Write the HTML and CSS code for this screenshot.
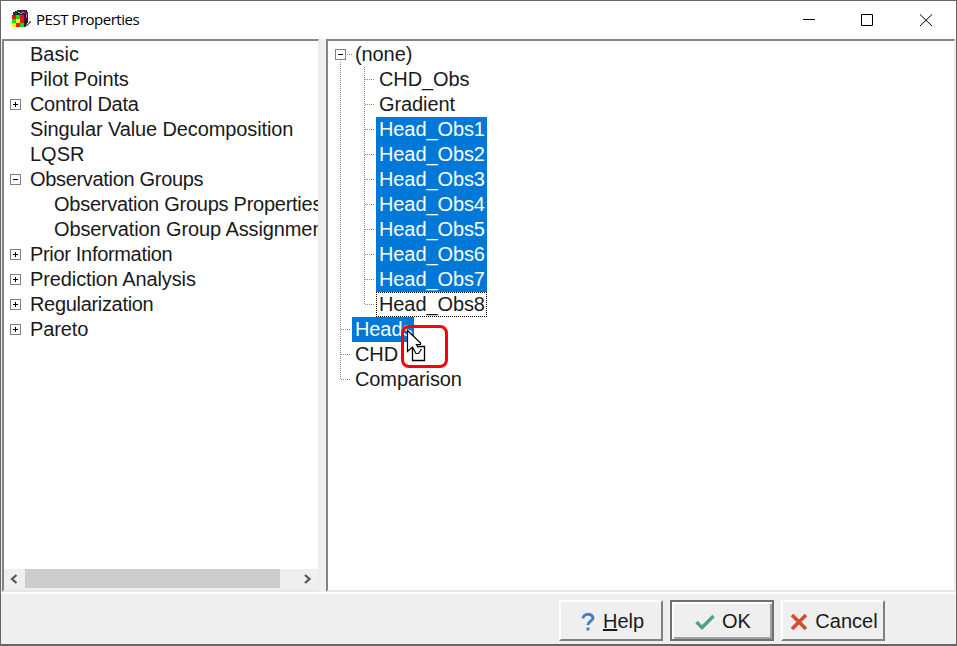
FILE: index.html
```html
<!DOCTYPE html>
<html lang="en">
<head>
<meta charset="utf-8">
<title>PEST Properties</title>
<link rel="stylesheet" href="styles.css">
</head>
<body>
<div class="window">
  <header class="titlebar">
    <svg class="app-icon" width="20" height="18" viewBox="0 0 20 18" shape-rendering="crispEdges">
      <path fill="#222" d="M2 2h2V1h2V0h10v2h1v11h-1v1h-1v3h-2V5H2z"/>
      <path fill="#3434e8" d="M5 1h3v1H5zM10 1h3v1h-3zM3 3h3v1H3z"/>
      <path fill="#40d8e8" d="M7 2h2v1H7zM9 3h2v1H9z"/>
      <path fill="#e040c0" d="M11 2h3v1h-3zM15 3h1v5h-1z"/>
      <path fill="#f01010" d="M1 5h4v4H1zM9 5h4v4H9zM5 13h4v4H5z"/>
      <path fill="#10e020" d="M5 5h4v4H5zM1 9h4v4H1zM9 13h4v4H9z"/>
      <path fill="#fff010" d="M5 9h4v4H5zM1 13h4v4H1z"/>
      <path fill="#f01010" d="M9 9h4v4H9z"/>
      <path fill="#777" d="M18 11h2v2h-1v1h-1v1h-1v1h-2v-2h2v-1h1z"/>
    </svg>
    <h1>PEST Properties</h1>
    <svg class="controls" width="130" height="13" viewBox="0 0 130 13" fill="none" stroke="#000">
      <path d="M0 5.500h12M58.500.5h11v11h-11zM117 .5l12 11.500M129 .5l-12 11.500"/>
    </svg>
  </header>
  <main class="panes">
    <nav class="pane sections">
      <ul class="list">
        <li>Basic</li>
        <li class="snug">Pilot Points</li>
        <li class="tight"><i class="box plus"></i>Control Data</li>
        <li class="snug">Singular Value Decomposition</li>
        <li>LQSR</li>
        <li class="tight"><i class="box"></i>Observation Groups</li>
        <li class="sub tight">Observation Groups Properties</li>
        <li class="sub snug">Observation Group Assignments</li>
        <li class="tight"><i class="box plus"></i>Prior Information</li>
        <li class="snug"><i class="box plus"></i>Prediction Analysis</li>
        <li class="tight"><i class="box plus"></i>Regularization</li>
        <li class="snug"><i class="box plus"></i>Pareto</li>
      </ul>
      <div class="scrollbar">
        <svg width="21" height="19" viewBox="0 0 21 19"><path d="M12.500 6L8 10l4.500 4" fill="none" stroke="#555" stroke-width="2.200"/></svg>
        <div class="thumb"></div>
        <svg width="21" height="19" viewBox="0 0 21 19"><path d="M8 6l4.500 4L8 14" fill="none" stroke="#555" stroke-width="2.200"/></svg>
      </div>
    </nav>
    <section class="pane groups">
      <ul class="list tree">
        <li><i class="box"></i><span>(none)</span></li>
        <li class="leaf"><span>CHD_Obs</span></li>
        <li class="leaf"><span>Gradient</span></li>
        <li class="leaf"><span class="selected">Head_Obs1</span></li>
        <li class="leaf"><span class="selected">Head_Obs2</span></li>
        <li class="leaf"><span class="selected">Head_Obs3</span></li>
        <li class="leaf"><span class="selected">Head_Obs4</span></li>
        <li class="leaf"><span class="selected">Head_Obs5</span></li>
        <li class="leaf"><span class="selected">Head_Obs6</span></li>
        <li class="leaf"><span class="selected">Head_Obs7</span></li>
        <li class="leaf"><span class="focused">Head_Obs8</span></li>
        <li><span class="selected">Heads</span></li>
        <li><span>CHD</span></li>
        <li><span>Comparison</span></li>
      </ul>
      <svg class="lines" width="50" height="345" viewBox="0 0 50 345" fill="none" stroke="#888" stroke-dasharray="1 1" shape-rendering="crispEdges">
        <path d="M12.500 20v318M36.500 25v238M19 12.500h5M37 37.500h10M37 62.500h10M37 87.500h10M37 112.500h10M37 137.500h10M37 162.500h10M37 187.500h10M37 212.500h10M37 237.500h10M37 262.500h10M13 287.500h10M13 312.500h10M13 337.500h10"/>
      </svg>
      <div class="drop-mark"></div>
      <svg class="cursor" width="22" height="34" viewBox="0 0 22 34">
        <path d="M6.500 17.500h12v14h-12z" fill="#fff" stroke="#000" stroke-width="1.300"/>
        <path d="M1.500 1.500v21l5-5 4.500 7h2.500l-3-8.500v-1H15z" fill="#fff"/>
        <path d="M6.500 18l-5 4.500v-21l13 12.500v1.500h-4l1.500 3M6.500 18l3.500 6.500h2.500l3-4.500" fill="none" stroke="#000" stroke-width="1.200"/>
      </svg>
    </section>
  </main>
  <footer class="actions">
    <button class="btn"><svg width="16" height="20" viewBox="0 0 16 20"><path d="M3 6.500c0-5.500 10-5.500 10-.5 0 3-5 3-5 7" fill="none" stroke="#4580bd" stroke-width="3"/><path d="M6.500 15.500h3v3h-3z" fill="#4580bd"/></svg><span><u>H</u>elp</span></button>
    <button class="btn default"><svg width="20" height="16" viewBox="0 0 20 16"><path d="M1.500 8l5.500 5.500L18.500 2" fill="none" stroke="#4ba47d" stroke-width="3.400"/></svg><span>OK</span></button>
    <button class="btn cancel"><svg width="18" height="18" viewBox="0 0 18 18"><path d="M2 2l14 14M16 2L2 16" stroke="#d24f34" stroke-width="3.700"/></svg><span>Cancel</span></button>
  </footer>
</div>
</body>
</html>
```
FILE: styles.css
```css
* { box-sizing: border-box; }
body {
  margin: 0;
  background: #666;
  font: 20px/25px "Liberation Sans", Arial, sans-serif;
  color: #1a1a1a;
  overflow: hidden;
}
.window {
  width: 957px;
  height: 646px;
  border: 1px solid #666;
  border-bottom-width: 2px;
  background: #fff;
  display: flex;
  flex-direction: column;
}
.titlebar {
  height: 38px;
  flex: none;
  display: flex;
  align-items: center;
  padding: 0 23px 0 10px;
}
.app-icon { flex: none; margin-top: -2px; }
h1 {
  margin: -2px auto 0 5px;
  font: 15px/20px "Open Sans", sans-serif;
  letter-spacing: -0.480px;
  color: #000;
}
.panes {
  height: 553px;
  flex: none;
  display: flex;
  background: #efefef;
  gap: 7px;
  padding: 0 1px;
}
.pane {
  border: 2px solid;
  border-width: 2px 1px 2px 2px;
  border-color: #858585 #e8e8e8 #e8e8e8 #858585;
  padding-top: 1px;
  background: #fff;
  position: relative;
  overflow: hidden;
}
.sections {
  width: 317px;
  display: flex;
  flex-direction: column;
  justify-content: space-between;
}
.groups { flex: 1; }
.list { margin: 0; padding: 0; list-style: none; }
.list li {
  display: flex;
  align-items: center;
  height: 25px;
  white-space: nowrap;
  padding-left: 26px;
  position: relative;
}
.list .sub { padding-left: 50px; }
.tight { letter-spacing: -0.320px; }
.snug { letter-spacing: -0.110px; }
.sub.tight { letter-spacing: -0.260px; }
.box {
  position: absolute;
  left: 6px;
  top: 7px;
  width: 11px;
  height: 11px;
  border: 1px solid #808080;
  background: linear-gradient(#000, #000) center / 5px 1px no-repeat #fff;
}
.plus {
  background: linear-gradient(#000, #000) center / 5px 1px no-repeat,
    linear-gradient(#000, #000) center / 1px 5px no-repeat #fff;
}
.list.tree li { padding-left: 24px; }
.list.tree .leaf { padding-left: 48px; }
.tree span { padding: 0 2px 0 3px; height: 25px; letter-spacing: -0.100px; }
.tree .box { left: 7px; z-index: 1; }
.selected { background: #0078d7; color: #fff; }
.focused { outline: 1px dotted #000; outline-offset: -1px; }
.lines { position: absolute; left: 0; top: 1px; }
.drop-mark {
  position: absolute;
  left: 73px;
  top: 284px;
  width: 47px;
  height: 43px;
  border: 3px solid #f00;
  border-radius: 8px;
}
.cursor { position: absolute; left: 78px; top: 288px; }
.scrollbar { display: flex; height: 21px; background: #efefef; }
.thumb { width: 255px; height: 19px; background: #cdcdcd; margin-right: 17px; }
.scrollbar svg { flex: none; }
.actions {
  flex: 1;
  display: flex;
  gap: 7px;
  padding: 6px 71px 0 0;
  justify-content: flex-end;
  background: #efefef;
  border-top: 2px solid #fff;
}
.btn {
  width: 104px;
  height: 41px;
  padding: 2px 0 0 2px;
  display: flex;
  align-items: center;
  justify-content: center;
  gap: 7px;
  font: inherit;
  color: #1a1a1a;
  background: #efefef;
  border: 2px solid;
  border-color: #fff #808080 #808080 #fff;
}
.default { border-color: #707070; box-shadow: inset 2px 2px #fff, inset -2px -2px #a0a0a0; }
```
